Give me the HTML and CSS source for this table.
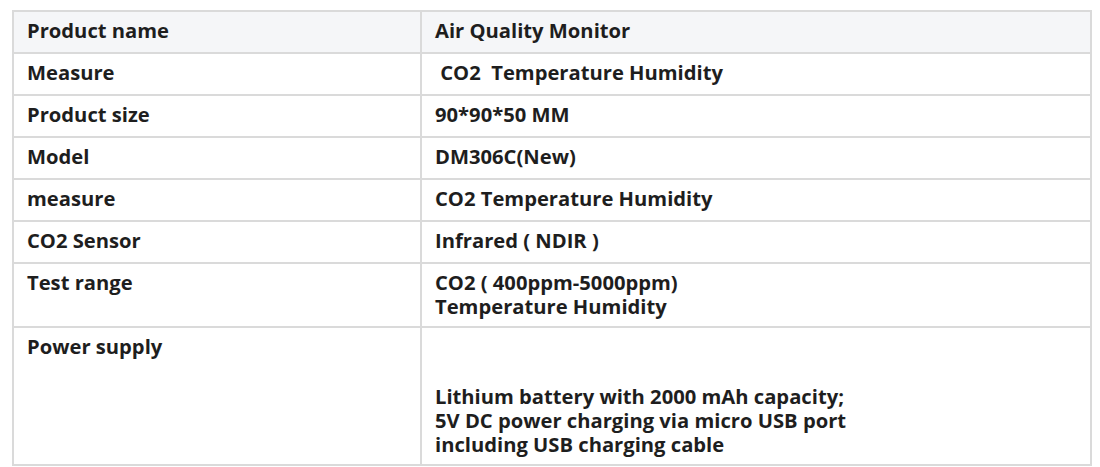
FILE: index.html
```html
<!DOCTYPE html>
<html>
<head>
<meta charset="utf-8">
<link rel="stylesheet" href="styles.css">
</head>
<body>
<table class="spec">
  <tr class="head"><td class="label">Product name</td><td class="value">Air Quality Monitor</td></tr>
  <tr><td class="label">Measure</td><td class="value">&nbsp;CO2&nbsp; Temperature Humidity</td></tr>
  <tr><td class="label">Product size</td><td class="value">90*90*50 MM</td></tr>
  <tr><td class="label">Model</td><td class="value">DM306C(New)</td></tr>
  <tr><td class="label">measure</td><td class="value">CO2 Temperature Humidity</td></tr>
  <tr><td class="label">CO2 Sensor</td><td class="value">Infrared ( NDIR )</td></tr>
  <tr class="double"><td class="label">Test range</td><td class="value">CO2 ( 400ppm-5000ppm)<br>Temperature Humidity</td></tr>
  <tr class="power"><td class="label">Power supply</td><td class="value"><br><br>Lithium battery with 2000 mAh capacity;<br>5V DC power charging via micro USB port<br>including USB charging cable</td></tr>
</table>
</body>
</html>
```
FILE: styles.css
```css
html, body {
  margin: 0;
  padding: 0;
  background: #ffffff;
}
body {
  padding: 10px 8px 0 12px;
  font-family: "Open Sans", "DejaVu Sans", sans-serif;
}
.spec {
  border-collapse: collapse;
  width: 1080px;
  table-layout: fixed;
  color: #1e1e1e;
  font-weight: 700;
  font-size: 20.2px;
  line-height: 24px;
}
.spec td {
  border: 2px solid #dadada;
  vertical-align: top;
  padding: 6px 12px 10px 13px;
}
.spec .label {
  width: 381px;
}
.head td {
  background: #f5f6f8;
}
.double td {
  padding-bottom: 8px;
}
.power .value {
  padding-top: 8px;
  padding-bottom: 8px;
}
```
